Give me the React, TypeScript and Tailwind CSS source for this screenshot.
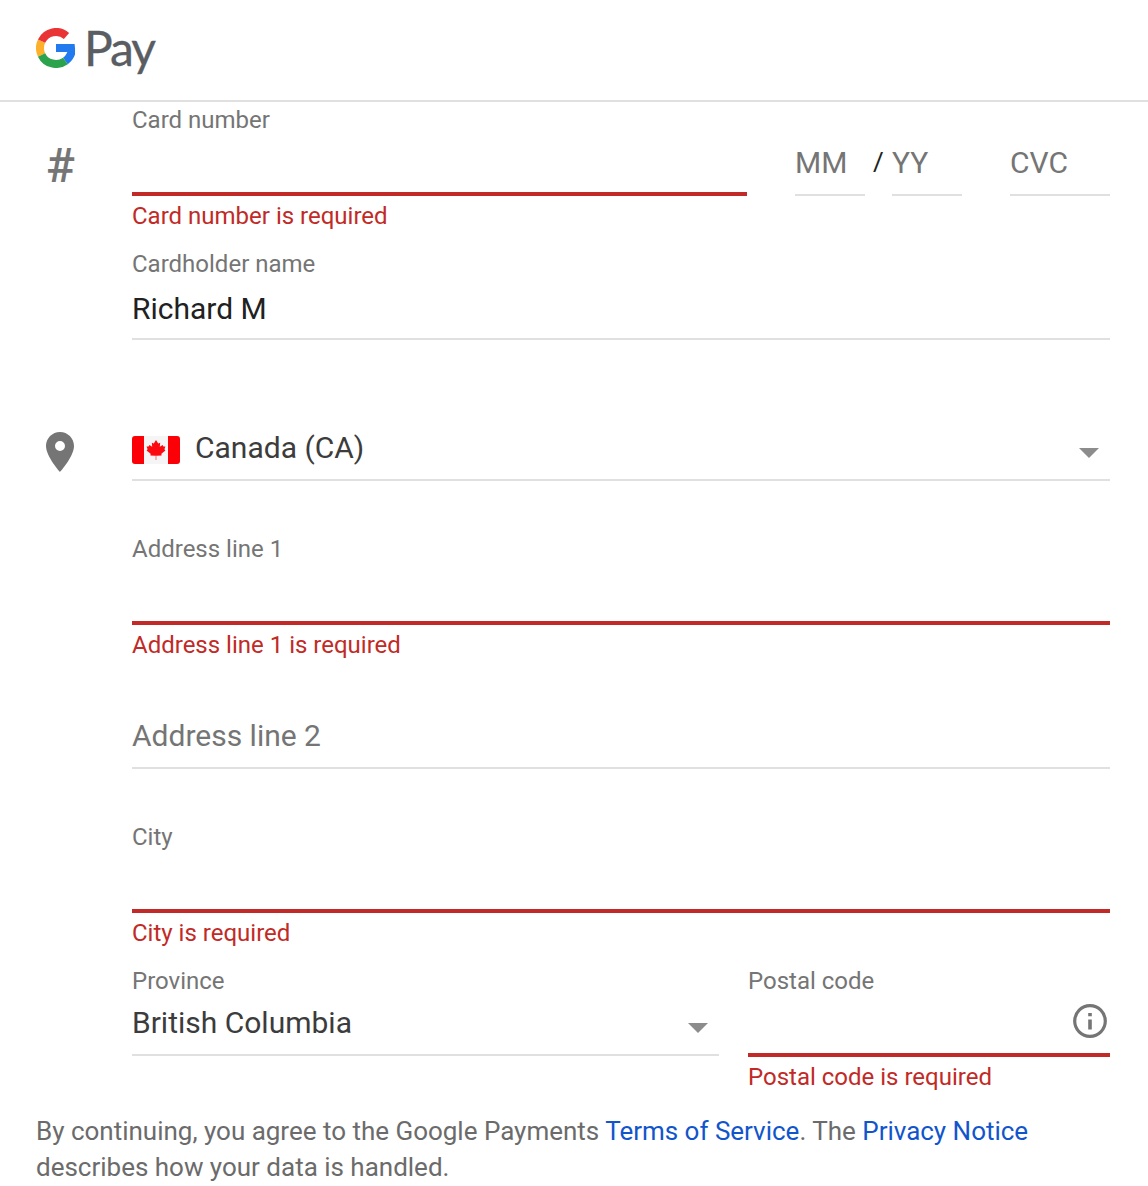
import React from 'react';
import { MdLocationOn } from 'react-icons/md';

const Caret = () => (
  <svg className="w-5 h-2.5 shrink-0" viewBox="0 0 20 10">
    <path d="M0 0h20L10 10z" fill="#8c8c8c" />
  </svg>
);

const GoogleLogo = () => (
  <svg className="w-[39px] h-10" viewBox="0 0 39 40" fill="none" strokeWidth="8">
    <path stroke="#fcb02c" d="M5.55 13.1A16 16 0 0 0 5.55 26.9" />
    <path stroke="#ea3335" d="M5.55 13.1A16 16 0 0 1 30.5 7.9" />
    <path stroke="#217bee" d="M36 20A16 16 0 0 1 29.4 32.9" />
    <path stroke="#2ba24c" d="M5.55 26.9A16 16 0 0 0 29.4 32.9" />
    <path fill="#217bee" stroke="none" d="M20 16h18.6l.4 4v4H20z" />
  </svg>
);

const CanadaFlag = () => (
  <svg className="w-12 h-7 mt-0.5" viewBox="0 0 48 28">
    <defs>
      <clipPath id="flag">
        <rect width="48" height="28" rx="3" />
      </clipPath>
    </defs>
    <g clipPath="url(#flag)">
      <rect width="48" height="28" fill="#f5f5f5" />
      <rect width="12" height="28" fill="#fb0007" />
      <rect x="36" width="12" height="28" fill="#fb0007" />
      <path fill="#fb0a10" d="M24 4l2.2 3.4 2-.6-.4 4 2.8-1.8.8 1.6 2-.2-1 2.8 1 1.2-4 3.4.2 1.8-4.8.2h-1.6l-4.8-.2.2-1.8-4-3.4 1-1.2-1-2.8 2 .2.8-1.6 2.8 1.8-.4-4 2 .6z" />
      <path fill="#fbb5b5" d="M23 20h2v4h-2z" />
    </g>
  </svg>
);

const Label = ({ children }: { children: React.ReactNode }) => (
  <div className="h-9 leading-9 text-[24px] text-[#757575]">{children}</div>
);

const ErrorText = ({ children }: { children: React.ReactNode }) => (
  <div className="h-10 leading-10 text-[24px] text-[#c12a26]">{children}</div>
);

const App = () => {
  return (
    <div className="w-[1148px] h-[1186px] overflow-hidden bg-white font-[Roboto,sans-serif]">
      <header className="flex h-[102px] border-b-2 border-[#e0e0e0] pl-9 pt-7">
        <GoogleLogo />
        <span className="ml-[9px] -mt-2 font-[Lato,sans-serif] text-[48px] leading-[56px] tracking-[-2px] text-[#5a5d62] [-webkit-text-stroke:0.3px_#5a5d62]">Pay</span>
      </header>

      <main className="pl-9 pr-[38px]">
        <section className="flex">
          <div className="w-24 pt-[39px] pl-2.5 text-[48px] leading-[50px] font-medium text-[#757575]">#</div>
          <div className="flex-1">
            <div className="flex">
              <div className="w-[615px]">
                <Label>Card number</Label>
                <div className="h-[58px] border-b-4 border-[#c12a26]"></div>
                <ErrorText>Card number is required</ErrorText>
              </div>
              <div className="flex ml-12 mt-7 h-[66px] leading-[66px] text-[30px] text-[#757575]">
                <div className="w-[70px] border-b-2 border-[#e0e0e0]">MM</div>
                <div className="w-[27px] pl-2 text-[26px] leading-[64px] text-[#212121]">/</div>
                <div className="w-[70px] border-b-2 border-[#e0e0e0]">YY</div>
                <div className="ml-12 w-[100px] border-b-2 border-[#e0e0e0]">CVC</div>
              </div>
            </div>
            <div className="mt-2.5">
              <Label>Cardholder name</Label>
              <div className="h-[58px] leading-[54px] text-[30px] text-[#212121] border-b-2 border-[#e0e0e0]">Richard M</div>
            </div>
          </div>
        </section>

        <section className="flex mt-[79px]">
          <div className="w-24 pt-[9px]">
            <MdLocationOn className="size-12 text-[#757575]" />
          </div>
          <div className="flex-1">
            <div className="flex items-center h-[62px] border-b-2 border-[#e0e0e0] pr-[11px]">
              <CanadaFlag />
              <span className="ml-[15px] flex-1 -mt-1 text-[30px] text-[#3c3c3c]">Canada (CA)</span>
              <div className="pt-2">
                <Caret />
              </div>
            </div>
            <div className="mt-[50px]">
              <Label>Address line 1</Label>
              <div className="h-[58px] border-b-4 border-[#c12a26]"></div>
              <ErrorText>Address line 1 is required</ErrorText>
            </div>
            <div className="mt-10 h-16 leading-[62px] text-[30px] text-[#757575] border-b-2 border-[#e0e0e0]">Address line 2</div>
            <div className="mt-[50px]">
              <Label>City</Label>
              <div className="h-[58px] border-b-4 border-[#c12a26]"></div>
              <ErrorText>City is required</ErrorText>
            </div>
            <div className="flex mt-2.5">
              <div className="w-[587px]">
                <Label>Province</Label>
                <div className="flex items-center h-[57px] border-b-2 border-[#e0e0e0] pr-[11px]">
                  <span className="flex-1 -mt-2 text-[30px] text-[#3c3c3c]">British Columbia</span>
                  <div className="pt-0.5">
                    <Caret />
                  </div>
                </div>
              </div>
              <div className="ml-[29px] flex-1">
                <Label>Postal code</Label>
                <div className="flex justify-end h-[58px] border-b-4 border-[#c12a26] pt-[5px] pr-[3px]">
                  <svg className="size-[34px]" viewBox="0 0 34 34">
                    <circle cx="17" cy="17" r="15.3" fill="none" stroke="#757575" strokeWidth="3.2" />
                    <path d="M15.2 9h3.6v3.2h-3.6zM15.2 15.5h3.6v10h-3.6z" fill="#757575" />
                  </svg>
                </div>
                <ErrorText>Postal code is required</ErrorText>
              </div>
            </div>
          </div>
        </section>

        <p className="mt-4 text-[26px] leading-9 tracking-[-0.01px] text-[#6b6b6b]">
          By continuing, you agree to the Google Payments <a className="text-[#1155cc]">Terms of Service</a>. The{' '}
          <a className="text-[#1155cc]">Privacy Notice</a> describes how your data is handled.
        </p>
      </main>
    </div>
  );
};

export default App;
